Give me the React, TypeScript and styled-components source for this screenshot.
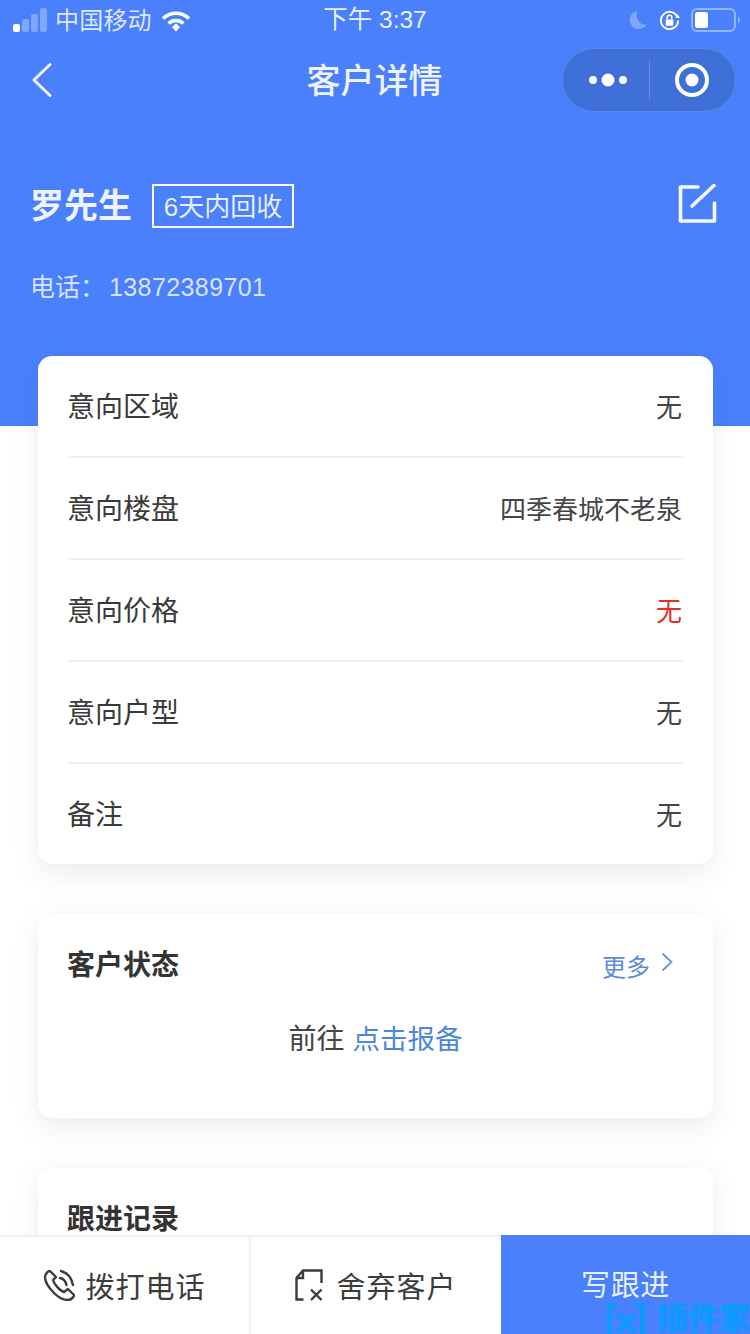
import React from 'react'
import styled, { createGlobalStyle } from 'styled-components'

const BLUE = '#4a80fc'

const GlobalStyle = createGlobalStyle`
	html, body {
		margin: 0;
		padding: 0;
		background: #fff;
	}
	* {
		box-sizing: border-box;
	}
`

const Page = styled.div`
	position: relative;
	width: 750px;
	height: 1334px;
	overflow: hidden;
	background: linear-gradient(${BLUE} 0, ${BLUE} 426px, #fff 426px);
	font-family: 'Liberation Sans', 'Noto Sans CJK SC', sans-serif;
	color: #333;
`

const StatusBar = styled.div`
	display: flex;
	align-items: center;
	height: 40px;
	padding: 0 0 0 13px;
	color: rgba(255, 255, 255, 0.82);
	font-size: 24px;
`

const Carrier = styled.span`
	margin-left: 8px;
	padding-bottom: 4px;
	letter-spacing: 0.2px;
`

const WifiIcon = styled.svg`
	margin-left: 9px;
	margin-top: 1px;
`

const Clock = styled.span`
	position: absolute;
	left: 0;
	right: 0;
	top: 4px;
	text-align: center;
	font-size: 24.5px;
	line-height: 32px;
	color: rgba(255, 255, 255, 0.9);
`

const StatusRight = styled.div`
	display: flex;
	align-items: center;
	gap: 11px;
	margin-left: auto;
	margin-right: 9px;
`

const NavBar = styled.div`
	position: relative;
	display: flex;
	align-items: center;
	justify-content: space-between;
	height: 80px;
	padding: 0 14px 0 30px;
`

const NavTitle = styled.div`
	position: absolute;
	left: 0;
	right: 0;
	padding: 0 1px 4px 0;
	text-align: center;
	color: rgba(255, 255, 255, 0.92);
	font-size: 34px;
	font-weight: 500;
`

const Capsule = styled.div`
	display: flex;
	align-items: center;
	width: 174px;
	height: 64px;
	border-radius: 32px;
	background: #3f6fd8;
	border: 1px solid #5a86e6;
`

const CapsulePart = styled.div`
	display: flex;
	flex: 1;
	align-items: center;
	justify-content: center;
	height: 40px;

	& + & {
		border-left: 1px solid #648ce4;
	}
`

const Profile = styled.div`
	padding: 64px 32px 0 30px;
	color: #fff;
`

const NameRow = styled.div`
	display: flex;
	align-items: center;
	height: 44px;
`

const Name = styled.div`
	padding-bottom: 5px;
	font-size: 34px;
	font-weight: 700;
	color: rgba(255, 255, 255, 0.92);
`

const Tag = styled.div`
	display: flex;
	align-items: center;
	justify-content: center;
	width: 142px;
	height: 44px;
	margin-left: 20px;
	padding-bottom: 4px;
	border: 2px solid #fff;
	font-size: 26px;
	color: rgba(255, 255, 255, 0.88);
`

const EditIcon = styled.svg`
	margin-left: auto;
	margin-top: -4px;
`

const Phone = styled.div`
	margin-top: 41px;
	font-size: 25px;
	line-height: 36px;
	color: rgba(255, 255, 255, 0.8);
`

const PhoneNumber = styled.span`
	margin-left: 4px;
	letter-spacing: 0.4px;
`

const Cards = styled.div`
	display: flex;
	flex-direction: column;
	gap: 50px;
	width: 675px;
	margin: 51px 0 0 38px;
`

const Card = styled.div<{ $height?: number }>`
	height: ${(p) => (p.$height ? `${p.$height}px` : 'auto')};
	padding: 0 30px;
	border-radius: 14px;
	background: #fff;
	box-shadow: 0 8px 28px rgba(60, 70, 90, 0.11);
`

const Row = styled.div`
	display: flex;
	align-items: center;
	justify-content: space-between;
	height: 100px;
	padding: 0 1px 2px 0;
	font-size: 28px;
	color: #3a3a3a;

	& + & {
		height: 102px;
		border-top: 2px solid #efefef;
	}
`

const RowLabel = styled.span`
	margin-left: -1px;
`

const RowValue = styled.span<{ $red?: boolean }>`
	font-size: 26px;
	color: ${(p) => (p.$red ? '#e0302a' : '#444')};
`

const CardHead = styled.div`
	display: flex;
	align-items: center;
	justify-content: space-between;
	height: 100px;
	padding-bottom: 2px;
`

const CardTitle = styled.div`
	margin-left: -1px;
	font-size: 28px;
	font-weight: 700;
	color: #333;
`

const More = styled.div`
	display: flex;
	align-items: center;
	gap: 11px;
	margin-right: 10px;
	padding-top: 4px;
	font-size: 24px;
	color: #5f8ad6;
`

const ChevronIcon = styled.svg`
	margin-top: -6px;
`

const ReportLine = styled.div`
	padding-top: 1px;
	text-align: center;
	font-size: 28px;
	line-height: 50px;
	color: #444;
`

const ReportLink = styled.span`
	margin-left: 8px;
	font-size: 27.5px;
	color: #4d86dd;
`

const BottomBar = styled.div`
	position: absolute;
	left: 0;
	right: 0;
	bottom: 0;
	display: grid;
	grid-template-columns: 249px 252px 249px;
	height: 99px;
	background: #fff;
	border-top: 2px solid #f0f0f0;
`

const BarButton = styled.div<{ $gap?: number; $divider?: boolean }>`
	display: flex;
	align-items: center;
	justify-content: center;
	gap: ${(p) => p.$gap ?? 10}px;
	padding-bottom: 1px;
	font-size: 29px;
	letter-spacing: 1px;
	color: #3c3c3c;
	background: #fff;
	border-left: ${(p) => (p.$divider ? '2px solid #f0f0f0' : '0')};
`

const PrimaryButton = styled(BarButton)`
	margin-top: -2px;
	padding-bottom: 3px;
	letter-spacing: 0.6px;
	color: rgba(255, 255, 255, 0.9);
	background: ${BLUE};
`

const Watermark = styled.div`
	position: absolute;
	right: 0;
	bottom: 0;
	display: flex;
	align-items: flex-start;
	gap: 12px;
	height: 31px;
	overflow: hidden;
	color: #0a9bff;
	font-size: 31px;
	font-weight: 900;
	line-height: 31px;
	white-space: nowrap;
`

const Signal = () => (
	<svg width="34" height="24" viewBox="0 0 34 24">
		<rect x="0" y="16" width="7" height="8" rx="2" fill="#fff" />
		<rect x="9" y="11" width="7" height="13" rx="2" fill="#fff" opacity="0.3" />
		<rect x="18" y="6" width="7" height="18" rx="2" fill="#fff" opacity="0.3" />
		<rect x="27" y="0" width="7" height="24" rx="2" fill="#fff" opacity="0.3" />
	</svg>
)

const Wifi = () => (
	<WifiIcon width="30" height="22" viewBox="0 0 30 22" fill="none">
		<path d="M2 8.500C9.500 1.500 20.500 1.500 28 8.500" stroke="#fff" strokeWidth="3.600" />
		<path d="M7.500 13.500C12 9.500 18 9.500 22.500 13.500" stroke="#fff" strokeWidth="3.600" />
		<path d="M11 17l4-3.500 4 3.500-4 4.500z" fill="#fff" />
	</WifiIcon>
)

const Moon = () => (
	<svg width="20" height="20" viewBox="0 0 20 22">
		<path d="M9 1C4 2 1 6 1 11c0 6 5 10 10 10 4 0 7-2 8.500-5C13 17 6.500 10 9 1z" fill="#fff" opacity="0.3" />
	</svg>
)

const RotationLock = () => (
	<svg width="21" height="21" viewBox="0 0 22 22" fill="none">
		<path d="M19.500 8A9 9 0 1 0 20 11" stroke="#fff" strokeWidth="2" />
		<path d="M17 8.500h5l-2.500-4z" fill="#fff" />
		<rect x="7" y="10" width="8" height="6.500" rx="1" fill="#fff" />
		<path d="M8.500 10V8a2.500 2.500 0 0 1 5 0v2" stroke="#fff" strokeWidth="1.500" />
	</svg>
)

const Battery = () => (
	<svg width="50" height="24" viewBox="0 0 50 24" fill="none">
		<rect x="1" y="1" width="43" height="22" rx="5" stroke="#fff" strokeOpacity="0.4" strokeWidth="2" />
		<rect x="4" y="4" width="13" height="16" rx="2.500" fill="#fff" />
		<path d="M47 8.500c1.500.5 2 2 2 3.500s-.5 3-2 3.500z" fill="#fff" fillOpacity="0.4" />
	</svg>
)

const BackArrow = () => (
	<svg width="24" height="36" viewBox="0 0 24 36" fill="none">
		<path d="M20 2.500 4 18l16 15.500" stroke="#fff" strokeOpacity="0.92" strokeWidth="3" strokeLinecap="round" strokeLinejoin="round" />
	</svg>
)

const MoreDots = () => (
	<svg width="44" height="20" viewBox="0 0 44 20">
		<circle cx="9" cy="10" r="4" fill="#fff" />
		<circle cx="24" cy="10" r="6.500" fill="#fff" />
		<circle cx="39" cy="10" r="4" fill="#fff" />
	</svg>
)

const CloseTarget = () => (
	<svg width="36" height="36" viewBox="0 0 36 36" fill="none">
		<circle cx="18" cy="18" r="15" stroke="#fff" strokeWidth="4" />
		<circle cx="18" cy="18" r="6.500" fill="#fff" />
	</svg>
)

const Edit = () => (
	<EditIcon width="40" height="40" viewBox="0 0 40 40" fill="none">
		<path d="M20 3H2.500v34h34V19" stroke="#fff" strokeOpacity="0.94" strokeWidth="3.600" strokeLinecap="round" strokeLinejoin="round" />
		<path d="M14 22 36 1.500" stroke="#fff" strokeOpacity="0.94" strokeWidth="3.600" strokeLinecap="round" />
	</EditIcon>
)

const Chevron = () => (
	<ChevronIcon width="12" height="20" viewBox="0 0 12 20" fill="none">
		<path d="M1.500 1.500 10.500 10 1.500 18.500" stroke="#6a90d8" strokeWidth="1.800" />
	</ChevronIcon>
)

const PhoneIcon = () => (
	<svg width="32" height="32" viewBox="0 0 32 32" fill="none" stroke="#3c3c3c" strokeWidth="2.400" strokeLinejoin="round" strokeLinecap="round">
		<path d="M7 2C5 2 2 5 2 8c0 5 4 11 9 16s10 7 14 7c3 0 6-3 6-5l-6-6-4 3c-4-1-10-8-11-12l3-3z" />
		<path d="M18 2c6 1.500 10.500 6.500 12 14" />
		<path d="M17 9c3 .5 5.500 3 6.500 7" />
	</svg>
)

const DropIcon = () => (
	<svg width="28" height="32" viewBox="0 0 28 32" fill="none" stroke="#3c3c3c" strokeWidth="2.400">
		<path d="M26.500 14V1.500H8L1.500 9V30.500h7" />
		<path d="M8 1.500V9H1.500" />
		<path d="M16 20.500l10.500 10.500M26.500 20.500 16 31" />
	</svg>
)

const WatermarkLogo = () => (
	<svg width="38" height="31" viewBox="0 0 38 31" fill="none" stroke="#0a9bff" strokeWidth="5">
		<path d="M10 2.500H2.500V31M28 2.500h7.500V31" />
		<path d="M11 11l16 18M27 11 11 29" />
	</svg>
)

const intentRows = [
	{ label: '意向区域', value: '无' },
	{ label: '意向楼盘', value: '四季春城不老泉' },
	{ label: '意向价格', value: '无', red: true },
	{ label: '意向户型', value: '无' },
	{ label: '备注', value: '无' },
]

const App: React.FC = () => {
	return (
		<Page>
			<GlobalStyle />
			<StatusBar>
				<Signal />
				<Carrier>中国移动</Carrier>
				<Wifi />
				<Clock>下午 3:37</Clock>
				<StatusRight>
					<Moon />
					<RotationLock />
					<Battery />
				</StatusRight>
			</StatusBar>
			<NavBar>
				<BackArrow />
				<NavTitle>客户详情</NavTitle>
				<Capsule>
					<CapsulePart>
						<MoreDots />
					</CapsulePart>
					<CapsulePart>
						<CloseTarget />
					</CapsulePart>
				</Capsule>
			</NavBar>
			<Profile>
				<NameRow>
					<Name>罗先生</Name>
					<Tag>6天内回收</Tag>
					<Edit />
				</NameRow>
				<Phone>
					电话：<PhoneNumber>13872389701</PhoneNumber>
				</Phone>
			</Profile>
			<Cards>
				<Card>
					{intentRows.map((row) => (
						<Row key={row.label}>
							<RowLabel>{row.label}</RowLabel>
							<RowValue $red={row.red}>{row.value}</RowValue>
						</Row>
					))}
				</Card>
				<Card $height={204}>
					<CardHead>
						<CardTitle>客户状态</CardTitle>
						<More>
							更多
							<Chevron />
						</More>
					</CardHead>
					<ReportLine>
						前往<ReportLink>点击报备</ReportLink>
					</ReportLine>
				</Card>
				<Card $height={204}>
					<CardHead>
						<CardTitle>跟进记录</CardTitle>
					</CardHead>
				</Card>
			</Cards>
			<BottomBar>
				<BarButton>
					<PhoneIcon />
					拨打电话
				</BarButton>
				<BarButton $divider $gap={13}>
					<DropIcon />
					舍弃客户
				</BarButton>
				<PrimaryButton>写跟进</PrimaryButton>
			</BottomBar>
			<Watermark>
				<WatermarkLogo />
				插件家
			</Watermark>
		</Page>
	)
}

export default App
